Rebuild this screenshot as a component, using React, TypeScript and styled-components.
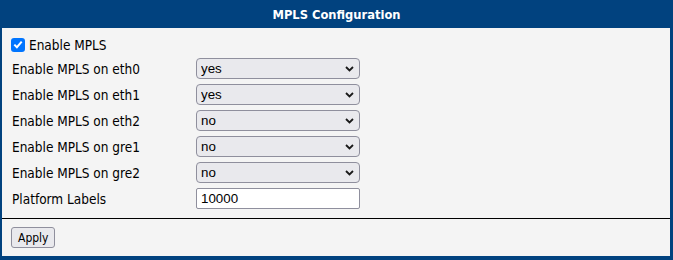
import { Fragment } from "react"
import styled, { createGlobalStyle } from "styled-components"

const blue = "#01427f"

const GlobalStyle = createGlobalStyle`
    body {
        margin: 0;
        background: #ffffff;
    }
`

const Frame = styled.div`
    box-sizing: border-box;
    width: 673px;
    height: 260px;
    display: flex;
    flex-direction: column;
    border-left: 2px solid ${blue};
    border-right: 3px solid ${blue};
    border-bottom: 4px solid ${blue};
    background: #f4f4f4;
`

const Header = styled.div`
    height: 28px;
    flex: none;
    margin: 0 -3px 0 -2px;
    display: flex;
    align-items: center;
    justify-content: center;
    background: ${blue};
    color: #ffffff;
    font-family: "DejaVu Sans Condensed", "DejaVu Sans", sans-serif;
    font-stretch: condensed;
    font-weight: 700;
    font-size: 12.8px;
`

const Body = styled.div`
    padding: 6px 0 9px 9px;
    border-bottom: 1px solid #000000;
`

const CheckRow = styled.label`
    height: 21px;
    margin-bottom: 3px;
    display: flex;
    align-items: center;
    gap: 4px;
    font-family: "DejaVu Sans Condensed", "DejaVu Sans", sans-serif;
    font-stretch: condensed;
    font-size: 13.5px;
    color: #000000;
`

const CheckBox = styled.span`
    width: 14px;
    height: 14px;
    display: flex;
    align-items: center;
    justify-content: center;
    border-radius: 3px;
    background: #0075ff;
`

const Grid = styled.div`
    display: grid;
    grid-template-columns: 185px 164px;
    grid-auto-rows: 21px;
    row-gap: 5px;
    align-items: center;
`

const Label = styled.span`
    padding-left: 1px;
    font-family: "DejaVu Sans Condensed", "DejaVu Sans", sans-serif;
    font-stretch: condensed;
    font-size: 13.5px;
    color: #000000;
`

const SelectWrap = styled.div`
    position: relative;
    width: 164px;
    height: 21px;
`

const Select = styled.select`
    appearance: none;
    box-sizing: border-box;
    width: 164px;
    height: 21px;
    margin: 0;
    padding: 0 0 0 4px;
    font-family: "Liberation Sans", Arial, sans-serif;
    font-size: 13.33px;
    color: #000000;
    background: #e9e9ed;
    border: 1px solid #8f8f9d;
    border-radius: 4px;
`

const Chevron = styled.svg`
    position: absolute;
    right: 6px;
    top: 8px;
    pointer-events: none;
`

const TextInput = styled.input`
    box-sizing: border-box;
    width: 164px;
    height: 21px;
    margin: 0;
    padding: 1px 4px;
    font-family: "Liberation Sans", Arial, sans-serif;
    font-size: 13.33px;
    color: #000000;
    background: #ffffff;
    border: 1px solid #8f8f9d;
    border-radius: 2px;
`

const Footer = styled.div`
    flex: 1;
    padding: 8px 0 0 9px;
`

const Button = styled.button`
    height: 21px;
    margin: 0;
    padding: 1px 6px;
    font-family: "DejaVu Sans Condensed", "DejaVu Sans", sans-serif;
    font-stretch: condensed;
    font-size: 12px;
    color: #000000;
    background: #e9e9ed;
    border: 1px solid #8f8f9d;
    border-radius: 3px;
`

const interfaces = [
    { name: "eth0", value: "yes" },
    { name: "eth1", value: "yes" },
    { name: "eth2", value: "no" },
    { name: "gre1", value: "no" },
    { name: "gre2", value: "no" },
]

export default function App() {
    return (
        <>
            <GlobalStyle />
            <Frame>
                <Header>MPLS Configuration</Header>
                <Body>
                    <CheckRow>
                        <CheckBox>
                            <svg width="10" height="9" viewBox="0 0 10 9">
                                <path d="M1.3 4.6 L3.9 7.2 L8.7 1.6" fill="none" stroke="#fff" strokeWidth="2" />
                            </svg>
                        </CheckBox>
                        Enable MPLS
                    </CheckRow>
                    <Grid>
                        {interfaces.map(i => (
                            <Fragment key={i.name}>
                                <Label>Enable MPLS on {i.name}</Label>
                                <SelectWrap>
                                    <Select defaultValue={i.value}>
                                        <option value="yes">yes</option>
                                        <option value="no">no</option>
                                    </Select>
                                    <Chevron width="9" height="6" viewBox="0 0 9 6">
                                        <path d="M1 1 L4.5 4.5 L8 1" fill="none" stroke="#1a1a1a" strokeWidth="1.8" />
                                    </Chevron>
                                </SelectWrap>
                            </Fragment>
                        ))}
                        <Label>Platform Labels</Label>
                        <TextInput type="text" defaultValue="10000" />
                    </Grid>
                </Body>
                <Footer>
                    <Button>Apply</Button>
                </Footer>
            </Frame>
        </>
    )
}
